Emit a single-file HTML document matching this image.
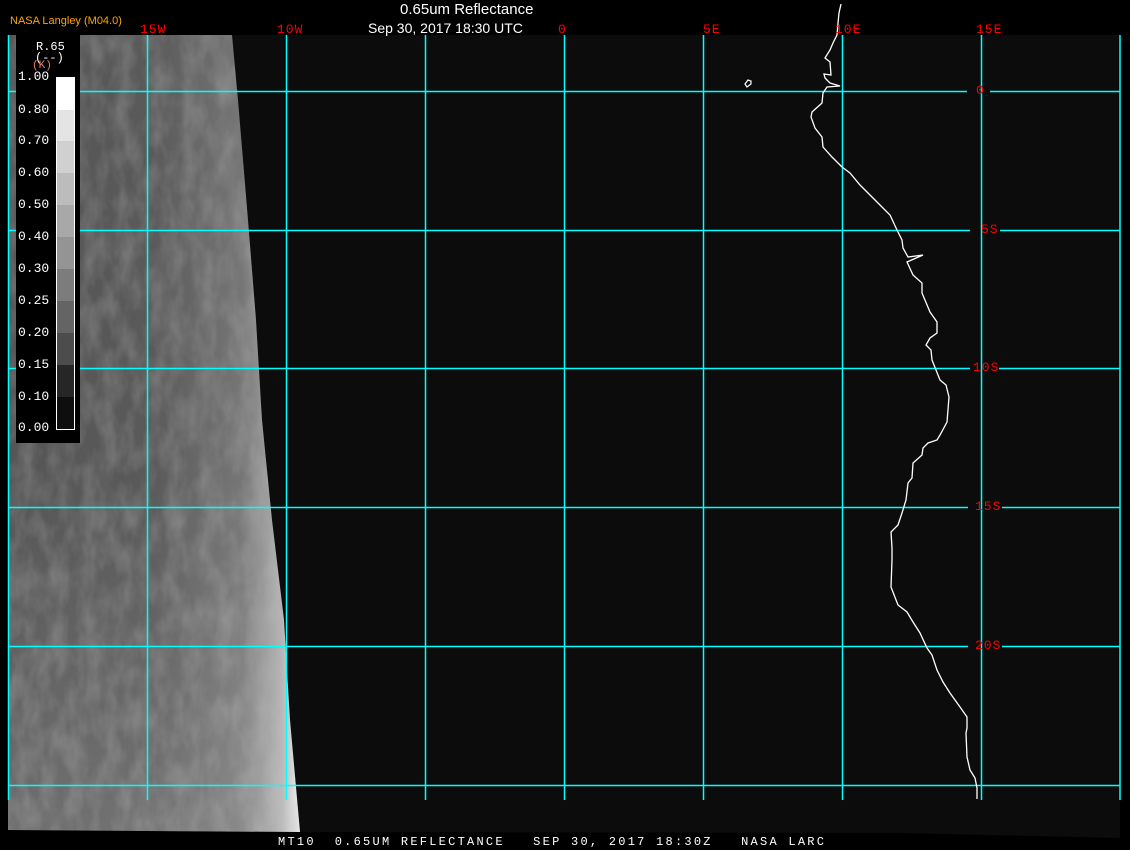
<!DOCTYPE html>
<html><head><meta charset="utf-8"><style>
html,body{margin:0;padding:0;background:#000;width:1130px;height:850px;overflow:hidden;position:relative;font-family:"Liberation Sans",sans-serif}
.t{position:absolute;white-space:pre}
.red{color:#f00;font-family:"Liberation Mono",monospace;font-size:13px;letter-spacing:1px}
</style></head><body>
<svg width="1130" height="850" style="position:absolute;left:0;top:0">
<defs>
<linearGradient id="cg" x1="0" y1="0" x2="1" y2="0">
<stop offset="0" stop-color="#555"/>
<stop offset="0.5" stop-color="#5a5a5a"/>
<stop offset="0.8" stop-color="#767676"/>
<stop offset="0.94" stop-color="#b0b0b0"/>
<stop offset="1" stop-color="#eeeeee"/>
</linearGradient>
<linearGradient id="vg" x1="0" y1="0" x2="0" y2="1">
<stop offset="0" stop-color="#fff" stop-opacity="0"/>
<stop offset="0.55" stop-color="#fff" stop-opacity="0"/>
<stop offset="1" stop-color="#fff" stop-opacity="0.15"/>
</linearGradient>
<clipPath id="cp"><polygon points="8,35 232,35 238,100 248,220 256,320 262,420 272,520 284,620 290,720 300,832 8,830"/></clipPath>
<filter id="tx" x="0" y="0" width="1" height="1"><feTurbulence type="fractalNoise" baseFrequency="0.06 0.03" numOctaves="3" seed="4"/><feColorMatrix type="matrix" values="0 0 0 0 0.5  0 0 0 0 0.5  0 0 0 0 0.5  0 0 0 1.4 -0.45"/></filter>
</defs>
<polygon points="8,35 1120,35 1120,838 900,833 300,832 8,830" fill="#0c0c0c"/>
<g clip-path="url(#cp)">
<rect x="8" y="35" width="292" height="800" fill="url(#cg)"/>
<rect x="8" y="35" width="292" height="800" fill="#000" opacity="0.4" filter="url(#tx)"/>
<rect x="8" y="35" width="292" height="800" fill="url(#vg)"/>
</g>
<g stroke="#00ffff" stroke-width="1.5">
<line x1="8.5" y1="35" x2="8.5" y2="800"/><line x1="147.5" y1="35" x2="147.5" y2="800"/><line x1="286.5" y1="35" x2="286.5" y2="800"/><line x1="425.5" y1="35" x2="425.5" y2="800"/><line x1="564.5" y1="35" x2="564.5" y2="800"/><line x1="703.5" y1="35" x2="703.5" y2="800"/><line x1="842.5" y1="35" x2="842.5" y2="800"/><line x1="981.5" y1="35" x2="981.5" y2="800"/><line x1="1120" y1="35" x2="1120" y2="800"/>
<line x1="8" y1="91.5" x2="967" y2="91.5"/><line x1="990" y1="91.5" x2="1120" y2="91.5"/>
<line x1="8" y1="230.5" x2="970" y2="230.5"/><line x1="1000" y1="230.5" x2="1120" y2="230.5"/>
<line x1="8" y1="368.5" x2="970" y2="368.5"/><line x1="999" y1="368.5" x2="1120" y2="368.5"/>
<line x1="8" y1="507.5" x2="968" y2="507.5"/><line x1="1002" y1="507.5" x2="1120" y2="507.5"/>
<line x1="8" y1="646.5" x2="968" y2="646.5"/><line x1="1002" y1="646.5" x2="1120" y2="646.5"/>
<line x1="8" y1="785.5" x2="1120" y2="785.5"/>
</g>
<polyline fill="none" stroke="#fff" stroke-width="1.3" points="841,4 839,13 838,23 837,35 833,43 830,50 825,58 830,62 831,75 824,74 825,78 830,83 840,86 827,87 823,93 822,103 812,112 811,117 815,128 822,137 823,147 832,157 842,167 850,173 860,185 868,193 878,203 890,215 897,230 902,240 903,248 908,257 923,255 907,262 913,275 922,283 922,293 930,312 937,322 937,333 930,338 926,345 931,350 932,360 936,370 940,380 946,385 949,397 947,422 940,435 937,440 928,443 923,448 922,455 913,463 912,478 908,483 906,500 902,513 898,525 891,532 892,548 892,560 891,587 898,605 907,612 913,622 920,633 927,648 932,655 937,670 943,682 950,693 960,707 967,717 967,728 966,733 967,757 970,770 975,778 977,788 977,799"/>
<path d="M745,84 l3,-4 3,1 0,3 -4,3 z" fill="none" stroke="#fff" stroke-width="1.2"/>
<rect x="16" y="35" width="64" height="408" fill="#000"/>
<g>
<rect x="56" y="77" width="19" height="33" fill="#fff"/>
<rect x="56" y="110" width="19" height="31" fill="#e4e4e4"/>
<rect x="56" y="141" width="19" height="32" fill="#d0d0d0"/>
<rect x="56" y="173" width="19" height="32" fill="#bcbcbc"/>
<rect x="56" y="205" width="19" height="32" fill="#a8a8a8"/>
<rect x="56" y="237" width="19" height="32" fill="#949494"/>
<rect x="56" y="269" width="19" height="32" fill="#7c7c7c"/>
<rect x="56" y="301" width="19" height="32" fill="#646464"/>
<rect x="56" y="333" width="19" height="32" fill="#4c4c4c"/>
<rect x="56" y="365" width="19" height="32" fill="#262626"/>
<rect x="56" y="397" width="19" height="33" fill="#0e0e0e"/>
<rect x="56.5" y="77.5" width="18" height="352" fill="none" stroke="#fff" stroke-width="1"/>
</g>
</svg>
<div class="t" style="left:10px;top:15px;color:#ffa500;font-size:11px">NASA Langley (M04.0)</div>
<div class="t" style="left:400px;top:1px;color:#fff;font-size:15px">0.65um Reflectance</div>
<div class="t" style="left:368px;top:20px;color:#fff;font-size:14px">Sep 30, 2017 18:30 UTC</div>
<div class="t red" style="left:140px;top:22px">15W</div>
<div class="t red" style="left:277px;top:22px">10W</div>
<div class="t red" style="left:558px;top:22px">0</div>
<div class="t red" style="left:703px;top:22px">5E</div>
<div class="t red" style="left:835px;top:22px">10E</div>
<div class="t red" style="left:976px;top:22px">15E</div>
<div class="t red" style="left:976px;top:83px">0</div>
<div class="t red" style="left:981px;top:222px">5S</div>
<div class="t red" style="left:973px;top:360px">10S</div>
<div class="t red" style="left:975px;top:499px">15S</div>
<div class="t red" style="left:975px;top:638px">20S</div>
<div style="position:absolute;left:18px;top:40px;width:40px;font-family:'Liberation Mono',monospace;font-size:12px;color:#fff">
<div class="t" style="left:18px;top:0">R.65</div>
<div class="t" style="left:17px;top:11px">(--)</div>
<div class="t" style="left:14px;top:20px;color:#e98060;font-size:11px">(K)</div>
</div>
<div style="position:absolute;left:18px;top:0;font-family:'Liberation Mono',monospace;font-size:13px;color:#fff">
<div class="t" style="top:69px">1.00</div><div class="t" style="top:102px">0.80</div><div class="t" style="top:133px">0.70</div><div class="t" style="top:165px">0.60</div><div class="t" style="top:197px">0.50</div><div class="t" style="top:229px">0.40</div><div class="t" style="top:261px">0.30</div><div class="t" style="top:293px">0.25</div><div class="t" style="top:325px">0.20</div><div class="t" style="top:357px">0.15</div><div class="t" style="top:389px">0.10</div><div class="t" style="top:420px">0.00</div>
</div>
<div class="t" style="left:278px;top:835px;color:#fff;font-family:'Liberation Mono',monospace;font-size:12px;letter-spacing:2.25px">MT10  0.65UM REFLECTANCE   SEP 30, 2017 18:30Z   NASA LARC</div>
</body></html>
